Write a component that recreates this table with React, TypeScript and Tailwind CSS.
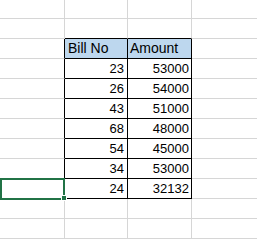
const rows: [string, string][] = [
  ['23', '53000'],
  ['26', '54000'],
  ['43', '51000'],
  ['68', '48000'],
  ['54', '45000'],
  ['34', '53000'],
  ['24', '32132'],
];

const grid = 'border-[#d6d6d6]';

function Blank({ black = '' }: { black?: string }) {
  return <div className={`h-5 border-b border-r ${grid} ${black}`} />;
}

export default function App() {
  const font = { fontFamily: '"Liberation Sans", Arial, sans-serif' };
  return (
    <div className="h-[240px] w-[257px] overflow-hidden bg-white text-[13px] text-black" style={font}>
      <div className="grid grid-cols-[65px_63px_64px_1fr]">
        {/* row 1 */}
        <div className={`h-[19px] border-b border-r ${grid}`} />
        <div className={`h-[19px] border-b border-r ${grid}`} />
        <div className={`h-[19px] border-b border-r ${grid}`} />
        <div className={`h-[19px] border-b ${grid}`} />
        {/* row 2 */}
        <Blank />
        <Blank black="border-b-black" />
        <Blank black="border-b-black" />
        <div className={`h-5 border-b ${grid}`} />
        {/* header */}
        <Blank black="border-r-black" />
        <div className="flex h-5 items-end border-b border-r border-black bg-[#bdd7ee] pb-[2px] pl-[3px] text-[14px] leading-[15px]">
          Bill No
        </div>
        <div className="flex h-5 items-end border-b border-r border-black bg-[#bdd7ee] pb-[2px] pl-[2px] text-[14px] leading-[15px]">
          Amount
        </div>
        <div className={`h-5 border-b ${grid}`} />
        {rows.map(([no, amt], i) => (
          <div key={i} className="contents">
            {i === rows.length - 1 ? (
              <div className="relative h-5 border-b border-r border-[#d6d6d6] border-r-black">
                <div className="absolute -top-px left-0 h-[22px] w-[65px] border-2 border-[#217346]" />
                <div className="absolute -bottom-[3px] -right-[3px] h-[6px] w-[6px] border border-white bg-[#217346]" />
              </div>
            ) : (
              <Blank black="border-r-black" />
            )}
            <div className="flex h-5 items-end justify-end border-b border-r border-black pb-[2px] pr-[3px] leading-[15px]">
              {no}
            </div>
            <div className="flex h-5 items-end justify-end border-b border-r border-black pb-[2px] pr-[2px] leading-[15px]">
              {amt}
            </div>
            <div className={`h-5 border-b ${grid}`} />
          </div>
        ))}
        {[0, 1].map((r) => (
          <div key={r} className="contents">
            <Blank />
            <Blank />
            <Blank />
            <div className={`h-5 border-b ${grid}`} />
          </div>
        ))}
      </div>
    </div>
  );
}
